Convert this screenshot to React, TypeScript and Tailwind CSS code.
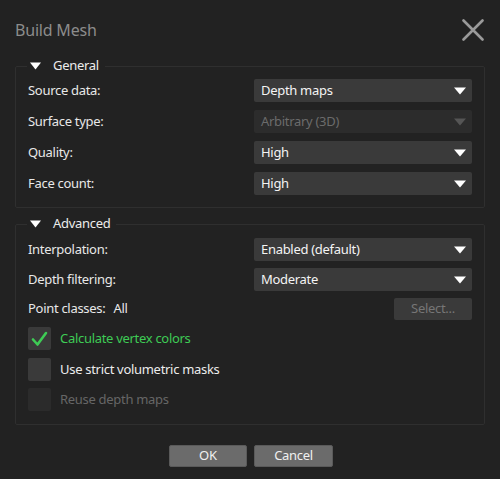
import React from "react";

const font = { fontFamily: '"Noto Sans", "Open Sans", Arial, sans-serif' };

function Caret({ disabled }: { disabled?: boolean }) {
  return (
    <svg width="12" height="8" viewBox="0 0 12 8" className="shrink-0">
      <path d="M0 0.5 H12 L6 7.5 Z" fill={disabled ? "#555555" : "#ffffff"} />
    </svg>
  );
}

function Combo({ value, disabled }: { value: string; disabled?: boolean }) {
  return (
    <div
      className={
        "flex h-[23px] w-[218px] items-center justify-between rounded-[2px] pl-[7px] pr-[6px] text-[13px] tracking-[-0.3px] " +
        (disabled ? "bg-[#2c2c2c] text-[#6b6b6b]" : "bg-[#3a3a3a] text-[#f4f4f4]")
      }
    >
      <span>{value}</span>
      <Caret disabled={disabled} />
    </div>
  );
}

function Row({ label, children }: { label: string; children: React.ReactNode }) {
  return (
    <div className="flex items-center justify-between">
      <span className="text-[13px] tracking-[-0.3px] text-[#e8e8e8]">{label}</span>
      {children}
    </div>
  );
}

function Group({ title, children }: { title: string; children: React.ReactNode }) {
  return (
    <fieldset className="mx-[15px] rounded-[2px] border border-[#2f2f2f] pl-[12px] pr-[12px]">
      <legend className="-ml-[1px] flex h-[18px] items-center gap-[12px] pl-[3px] pr-[6px] text-[13px] tracking-[-0.3px] text-[#ececec]">
        <svg width="11" height="8" viewBox="0 0 11 8">
          <path d="M0 0.5 H11 L5.5 7.5 Z" fill="#ffffff" />
        </svg>
        {title}
      </legend>
      {children}
    </fieldset>
  );
}

function Check({ label, checked, disabled }: { label: string; checked?: boolean; disabled?: boolean }) {
  return (
    <div className="flex h-[23px] items-center gap-[9px]">
      <div
        className={
          "flex h-[23px] w-[23px] items-center justify-center rounded-[2px] " +
          (disabled ? "bg-[#2b2b2b]" : "bg-[#3a3a3a]")
        }
      >
        {checked && (
          <svg width="17" height="16" viewBox="0 0 17 16">
            <path d="M2 8.5 L6.5 13.5 L15 2" fill="none" stroke="#3ecb55" strokeWidth="2.6" strokeLinecap="round" strokeLinejoin="round" />
          </svg>
        )}
      </div>
      <span
        className={
          "text-[13px] tracking-[-0.3px] " +
          (checked ? "text-[#3ecb55]" : disabled ? "text-[#666666]" : "text-[#ececec]")
        }
      >
        {label}
      </span>
    </div>
  );
}

export default function App() {
  return (
    <div className="h-[479px] w-[500px] bg-[#222222]" style={font}>
      <div className="flex h-[57px] items-start justify-between pl-[15px] pr-[16px] pt-[18px]">
        <span className="text-[16px] leading-[24px] tracking-[-0.2px] text-[#8c8c8c]">Build Mesh</span>
        <svg width="22" height="22" viewBox="0 0 22 22" className="mt-[1px]">
          <path d="M1.5 1.5 L20.5 20.5 M20.5 1.5 L1.5 20.5" stroke="#9a9a9a" strokeWidth="2.6" strokeLinecap="round" />
        </svg>
      </div>

      <Group title="General">
        <div className="flex flex-col gap-[8px] pb-[12px] pt-[4px]">
          <Row label="Source data:">
            <Combo value="Depth maps" />
          </Row>
          <Row label="Surface type:">
            <Combo value="Arbitrary (3D)" disabled />
          </Row>
          <Row label="Quality:">
            <Combo value="High" />
          </Row>
          <Row label="Face count:">
            <Combo value="High" />
          </Row>
        </div>
      </Group>

      <div className="h-[7px]" />

      <Group title="Advanced">
        <div className="flex flex-col pb-[13px] pt-[5px]">
          <Row label="Interpolation:">
            <Combo value="Enabled (default)" />
          </Row>
          <div className="mt-[7px]">
            <Row label="Depth filtering:">
              <Combo value="Moderate" />
            </Row>
          </div>
          <div className="mt-[7px] flex h-[22px] items-center justify-between">
            <span className="text-[13px] tracking-[-0.3px] text-[#e8e8e8]">
              Point classes:<span className="ml-[8px]">All</span>
            </span>
            <div className="flex h-[22px] w-[78px] items-center justify-center rounded-[2px] bg-[#3a3a3a] text-[13px] tracking-[-0.3px] text-[#767676]">
              Select...
            </div>
          </div>
          <div className="mt-[7px]">
            <Check label="Calculate vertex colors" checked />
          </div>
          <div className="mt-[8px]">
            <Check label="Use strict volumetric masks" />
          </div>
          <div className="mt-[7px]">
            <Check label="Reuse depth maps" disabled />
          </div>
        </div>
      </Group>

      <div className="flex justify-center gap-[7px] pl-[2px] pt-[20px]">
        <button className="h-[22px] w-[78px] rounded-[2px] border border-[#5a5a5a] bg-[#6b6b6b] text-[13px] text-[#f0f0f0]">
          OK
        </button>
        <button className="h-[22px] w-[79px] rounded-[2px] border border-[#5a5a5a] bg-[#6b6b6b] text-[13px] tracking-[-0.3px] text-[#f0f0f0]">
          Cancel
        </button>
      </div>
    </div>
  );
}
